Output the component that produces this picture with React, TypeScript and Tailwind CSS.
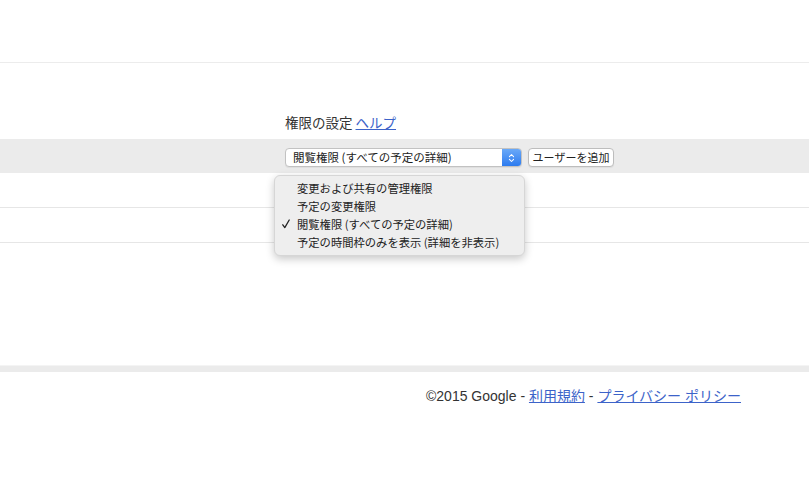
import React from 'react';

const jp = { fontFamily: '"Noto Sans CJK JP", "Noto Sans", sans-serif' };

const options = [
  '変更および共有の管理権限',
  '予定の変更権限',
  '閲覧権限 (すべての予定の詳細)',
  '予定の時間枠のみを表示 (詳細を非表示)',
];

function Check() {
  return (
    <svg viewBox="0 0 10 12" className="w-[8px] h-[10px]">
      <path d="M1 7 L3.5 10.5 L9 1" fill="none" stroke="#222" strokeWidth="1.6" strokeLinecap="round" strokeLinejoin="round" />
    </svg>
  );
}

function Stepper() {
  return (
    <svg viewBox="0 0 10 14" className="w-[7px] h-[10px]">
      <path d="M2 5 L5 2 L8 5 M2 9 L5 12 L8 9" fill="none" stroke="white" strokeWidth="1.5" strokeLinecap="round" strokeLinejoin="round" />
    </svg>
  );
}

export default function App() {
  const selected = 2;

  return (
    <div className="w-[809px] h-[500px] bg-white text-[#333]" style={jp}>
      <div className="h-[63px] border-b border-[#ececec]" />

      <div className="pt-[50px] pl-[285px] text-[13.5px] leading-[18px]">
        権限の設定 <a className="text-[#3c63c9] underline">ヘルプ</a>
      </div>

      <div className="mt-[8px] h-[34px] bg-[#ebebeb] pt-[9px] pl-[285px] flex gap-[6px]">
        <div className="relative">
          <div className="w-[237px] h-[19px] bg-white border border-[#c2c2c2] rounded-[4px] flex items-stretch overflow-hidden shadow-[0_1px_1px_rgba(0,0,0,0.06)]">
            <span className="flex-1 pl-[7px] text-[11.5px] leading-[17px] text-[#222]">閲覧権限 (すべての予定の詳細)</span>
            <span className="w-[19px] flex items-center justify-center bg-gradient-to-b from-[#6aa9f8] to-[#2c7bef]">
              <Stepper />
            </span>
          </div>

          <div className="absolute left-[-11px] top-[27px] w-[251px] rounded-[6px] bg-[#eeeeee] border border-[#d6d6d6] shadow-[0_3px_8px_rgba(0,0,0,0.22)] pt-[3px] pb-[4px] z-10">
            {options.map((o, i) => (
              <div key={o} className="h-[18px] flex items-center text-[11.3px] text-[#222]">
                <span className="w-[22px] flex justify-center">{i === selected && <Check />}</span>
                <span>{o}</span>
              </div>
            ))}
          </div>
        </div>

        <button className="w-[86px] h-[19px] bg-white border border-[#bdbdbd] rounded-[4px] text-[11px] leading-[17px] text-[#222] shadow-[0_1px_1px_rgba(0,0,0,0.06)]">
          ユーザーを追加
        </button>
      </div>

      <div className="h-[35px] border-b border-[#e6e6e6]" />
      <div className="h-[35px] border-b border-[#e6e6e6]" />

      <div className="mt-[122px] border-t border-[#f4f4f4] h-[7px] bg-[#ebebeb]" />

      <div className="pt-[15px] pr-[68px] text-right text-[14px] leading-[18px] text-[#333]" style={{ fontFamily: '"Liberation Sans", "Noto Sans CJK JP", sans-serif' }}>
        ©2015 Google - <a className="text-[#3c63c9] underline">利用規約</a> - <a className="text-[#3c63c9] underline">プライバシー ポリシー</a>
      </div>
    </div>
  );
}
